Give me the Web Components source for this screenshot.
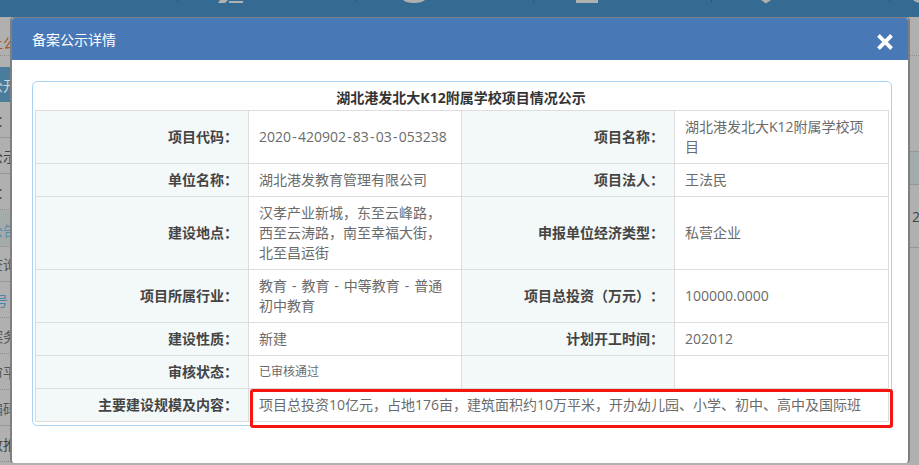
<!DOCTYPE html>
<html lang="zh">
<head>
<meta charset="utf-8">
<title>备案公示详情</title>
<style>
  html, body { margin: 0; height: 100%; overflow: hidden; background: #b0b0b0; }
  body { font-family: "Open Sans", "Noto Sans CJK SC", "Liberation Sans", sans-serif; font-size: 14px; text-spacing-trim: space-all; }
  .code-dash { padding: 0 1.2px; }
</style>
</head>
<body>
<back-drop>
  <top-nav slot="top"></top-nav>
  <side-row slot="left" h="7" line="none"></side-row>
  <side-row slot="left" h="32" line="dotted" tone="#a5562f" pad="4">上公</side-row>
  <side-row slot="left" h="11" line="none"></side-row>
  <side-row slot="left" h="35" line="none" bg="#4a7d9c" tone="#ccd6dc">公开</side-row>
  <side-row slot="left" h="36" line="solid" tone="#555" shift="6">：</side-row>
  <side-row slot="left" h="36" line="solid" tone="#444">公示</side-row>
  <side-row slot="left" h="36" line="dotted" tone="#555" shift="6">：</side-row>
  <side-row slot="left" h="37" line="dotted" bg="#a4abab" tone="#5d8ba8" pad="3">公告</side-row>
  <side-row slot="left" h="35" line="solid" tone="#555">查询</side-row>
  <side-row slot="left" h="36" line="dotted" tone="#4d85ad" shift="9">号</side-row>
  <side-row slot="left" h="36" line="dotted" tone="#555">案务</side-row>
  <side-row slot="left" h="36" line="dotted" tone="#555">审平</side-row>
  <side-row slot="left" h="36" line="solid" tone="#555">编码</side-row>
  <side-row slot="left" h="36" line="dotted" tone="#444">数推</side-row>

  <side-row slot="right" h="39" line="dotted"></side-row>
  <side-row slot="right" h="96" line="solid"></side-row>
  <side-row slot="right" h="33" line="solid" bg="#a4abab"></side-row>
  <side-row slot="right" h="63" line="solid" tone="#444" start>2</side-row>
</back-drop>

<detail-modal heading="备案公示详情">
  <detail-panel heading="湖北港发北大K12附属学校项目情况公示">
    <detail-row>
      <detail-cell head>项目代码：</detail-cell><detail-cell nowrap>2020<span class="code-dash">-</span>420902<span class="code-dash">-</span>83<span class="code-dash">-</span>03<span class="code-dash">-</span>053238</detail-cell>
      <detail-cell head>项目名称：</detail-cell><detail-cell>湖北港发北大K12附属学校项目</detail-cell>
    </detail-row>
    <detail-row>
      <detail-cell head>单位名称：</detail-cell><detail-cell>湖北港发教育管理有限公司</detail-cell>
      <detail-cell head>项目法人：</detail-cell><detail-cell>王法民</detail-cell>
    </detail-row>
    <detail-row>
      <detail-cell head>建设地点：</detail-cell><detail-cell>汉孝产业新城，东至云峰路，西至云涛路，南至幸福大街，北至昌运街</detail-cell>
      <detail-cell head>申报单位经济类型：</detail-cell><detail-cell>私营企业</detail-cell>
    </detail-row>
    <detail-row>
      <detail-cell head>项目所属行业：</detail-cell><detail-cell spaced>教育 - 教育 - 中等教育 - 普通初中教育</detail-cell>
      <detail-cell head>项目总投资（万元）：</detail-cell><detail-cell>100000.0000</detail-cell>
    </detail-row>
    <detail-row>
      <detail-cell head>建设性质：</detail-cell><detail-cell>新建</detail-cell>
      <detail-cell head>计划开工时间：</detail-cell><detail-cell>202012</detail-cell>
    </detail-row>
    <detail-row>
      <detail-cell head>审核状态：</detail-cell><detail-cell small>已审核通过</detail-cell>
      <detail-cell head></detail-cell><detail-cell></detail-cell>
    </detail-row>
    <detail-row>
      <detail-cell head>主要建设规模及内容：</detail-cell>
      <detail-cell wide>项目总投资10亿元，占地176亩，建筑面积约10万平米，开办幼儿园、小学、初中、高中及国际班</detail-cell>
    </detail-row>
  </detail-panel>
  <mark-box slot="over"></mark-box>
</detail-modal>

<script>
// fondo oscurecido detras del modal
class BackDrop extends HTMLElement {
  constructor() {
    super();
    this.attachShadow({ mode: 'open' });
    this.shadowRoot.innerHTML = `
      <style>
        :host { display: block; height: 465px; overflow: hidden; background: #b0b0b0; }
        .main { display: flex; justify-content: space-between; }
        .left { width: 17px; display: flex; flex-direction: column; }
        .right { width: 9px; display: flex; flex-direction: column; }
      </style>
      <slot name="top"></slot>
      <div class="main">
        <div class="left"><slot name="left"></slot></div>
        <div class="right"><slot name="right"></slot></div>
      </div>
    `;
  }
}
customElements.define('back-drop', BackDrop);

// barra superior, solo se ve la parte baja de los iconos
class TopNav extends HTMLElement {
  constructor() {
    super();
    this.attachShadow({ mode: 'open' });
    this.shadowRoot.innerHTML = `
      <style>
        :host { display: flex; height: 17px; overflow: hidden; background: #356a92; }
        .cell { position: relative; flex: 0 0 178px; box-sizing: border-box; height: 17px; }
        .cell:first-child { flex-basis: 104px; }
        .cell:last-child { flex: 1; }
        .cell::after { content: ''; position: absolute; right: 0; top: 0; width: 1px; height: 2px; background: #24587f; }
        .cell:last-child::after { display: none; }
        svg { display: block; }
      </style>
      <div class="cell"></div>
      <div class="cell" style="padding-left:39px">
        <svg width="28" height="4" viewBox="0 0 28 4"><path d="M1 3 L8 3 L11 0 L3 0 Z M12 1 H26 V3 H12 Z" fill="#b0b0b0"/></svg>
      </div>
      <div class="cell" style="padding-left:46px">
        <svg width="24" height="4" viewBox="0 0 24 4"><path d="M1 0 H23 Q20 3 12 3 Q4 3 1 0 Z" fill="#b0b0b0"/></svg>
      </div>
      <div class="cell" style="padding-left:42px">
        <svg width="22" height="3" viewBox="0 0 22 3"><rect width="22" height="3" fill="#b0b0b0"/></svg>
      </div>
      <div class="cell" style="padding-left:42px">
        <svg width="24" height="4" viewBox="0 0 24 4"><path d="M7 0 H17 L12 3.5 Z" fill="#b0b0b0"/></svg>
      </div>
      <div class="cell" style="padding-left:22px">
        <svg width="24" height="4" viewBox="0 0 24 4"><path d="M1 0 H23 Q20 3 12 3 Q4 3 1 0 Z" fill="#b0b0b0"/></svg>
      </div>
    `;
  }
}
customElements.define('top-nav', TopNav);

// fila del menu lateral o de la tabla de fondo
class SideRow extends HTMLElement {
  constructor() {
    super();
    this.attachShadow({ mode: 'open' });
    const line = this.getAttribute('line');
    const bottom = line === 'none' ? 'none'
      : line === 'dotted' ? '1px dotted #8f8f8f' : '1px solid #969696';
    this.shadowRoot.innerHTML = `
      <style>
        :host {
          display: flex;
          box-sizing: border-box;
          flex: none;
          height: ${this.getAttribute('h')}px;
          align-items: center;
          justify-content: ${this.hasAttribute('start') ? 'flex-start' : 'flex-end'};
          overflow: hidden;
          white-space: nowrap;
          padding-top: ${this.getAttribute('pad') || 0}px;
          padding-right: ${this.getAttribute('shift') || 0}px;
          padding-left: ${this.hasAttribute('start') ? 2 : 0}px;
          background: ${this.getAttribute('bg') || 'transparent'};
          color: ${this.getAttribute('tone') || '#555'};
          border-bottom: ${bottom};
        }
      </style>
      <slot></slot>
    `;
  }
}
customElements.define('side-row', SideRow);

// ventana modal
class DetailModal extends HTMLElement {
  constructor() {
    super();
    this.attachShadow({ mode: 'open' });
    this.shadowRoot.innerHTML = `
      <style>
        :host {
          position: absolute;
          left: 10px;
          top: 17px;
          width: 900px;
          height: 446px;
          box-sizing: border-box;
          background: #fff;
          border: solid #7f7f7f;
          border-width: 1px 2px 0;
          border-radius: 4px;
        }
        .head {
          display: flex;
          align-items: center;
          justify-content: space-between;
          height: 42px;
          padding: 0 15px 0 20px;
          background: #4878b5;
          color: #fff;
          border-radius: 3px 3px 0 0;
        }
        .title { font-size: 14px; }
        svg { display: block; margin-top: 5px; }
        .body { padding: 21px 16px 0 20px; }
      </style>
      <div class="head">
        <span class="title"></span>
        <svg width="16" height="16" viewBox="0 0 16 16"><path d="M2.8 2.8 L13.2 13.2 M13.2 2.8 L2.8 13.2" stroke="#fff" stroke-width="3.8" stroke-linecap="square" fill="none"/></svg>
      </div>
      <div class="body"><slot></slot></div>
      <slot name="over"></slot>
    `;
    this.shadowRoot.querySelector('.title').textContent = this.getAttribute('heading');
  }
}
customElements.define('detail-modal', DetailModal);

// recuadro con el titulo y las filas
class DetailPanel extends HTMLElement {
  constructor() {
    super();
    this.attachShadow({ mode: 'open' });
    this.shadowRoot.innerHTML = `
      <style>
        :host {
          display: block;
          width: 860px;
          box-sizing: border-box;
          padding: 0 2px 3px;
          border: 1px solid #aad3f3;
          border-radius: 5px;
        }
        .title {
          height: 28px;
          padding-right: 2px;
          line-height: 32px;
          text-align: center;
          font-size: 14px;
          font-weight: bold;
          color: #333;
        }
        .rows { border: solid #ddd; border-width: 1px 0 0 1px; }
      </style>
      <div class="title"></div>
      <div class="rows"><slot></slot></div>
    `;
    this.shadowRoot.querySelector('.title').textContent = this.getAttribute('heading');
  }
}
customElements.define('detail-panel', DetailPanel);

class DetailRow extends HTMLElement {
  constructor() {
    super();
    this.attachShadow({ mode: 'open' });
    this.shadowRoot.innerHTML = `
      <style>
        :host { display: grid; grid-template-columns: 213px 213px 213px 214px; }
      </style>
      <slot></slot>
    `;
  }
}
customElements.define('detail-row', DetailRow);

class DetailCell extends HTMLElement {
  constructor() {
    super();
    this.attachShadow({ mode: 'open' });
    this.shadowRoot.innerHTML = `
      <style>
        :host {
          display: flex;
          align-items: center;
          box-sizing: border-box;
          min-height: 33px;
          padding: 6px 12px 6px 10px;
          line-height: 20px;
          color: #6b6b6b;
          border: solid #ddd;
          border-width: 0 1px 1px 0;
        }
        :host([head]) {
          justify-content: flex-end;
          padding-right: 10px;
          background: #f3f8f8;
          color: #444;
          font-weight: bold;
        }
        :host([small]) { font-size: 12px; }
        :host([wide]) { grid-column: span 3; }
        :host([nowrap]) { white-space: nowrap; }
        :host([spaced]) { word-spacing: 1.3px; }
        div { min-width: 0; }
      </style>
      <div><slot></slot></div>
    `;
  }
}
customElements.define('detail-cell', DetailCell);

// marca roja encima de la ultima fila
class MarkBox extends HTMLElement {
  constructor() {
    super();
    this.attachShadow({ mode: 'open' });
    this.shadowRoot.innerHTML = `
      <style>
        :host {
          position: absolute;
          left: 238px;
          top: 371px;
          width: 643px;
          height: 39px;
          box-sizing: border-box;
          border: 3px solid #f5150f;
          border-radius: 3px;
        }
      </style>
    `;
  }
}
customElements.define('mark-box', MarkBox);
</script>
</body>
</html>
